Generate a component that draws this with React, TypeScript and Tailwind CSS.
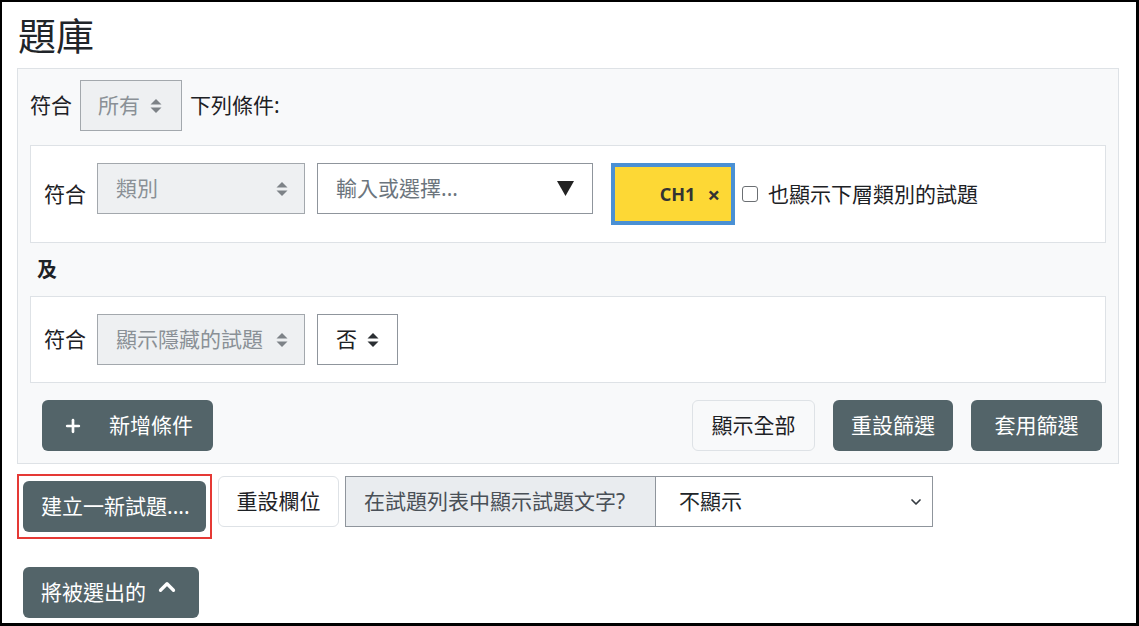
import { ChevronDown, ChevronUp, Plus } from "lucide-react";

function SortArrows({ dark }: { dark?: boolean }) {
  return (
    <svg width="12" height="16" viewBox="0 0 12 16" className="shrink-0">
      <polygon points="6,1 11.5,6.5 0.5,6.5" fill={dark ? "#2b2f33" : "#7d8287"} />
      <polygon points="0.5,9.5 11.5,9.5 6,15" fill={dark ? "#2b2f33" : "#7d8287"} />
    </svg>
  );
}

const darkBtn =
  "h-[51px] rounded-[6px] bg-[#536469] text-white flex items-center text-[21px] leading-none";

export default function App() {
  return (
    <div className="w-[1139px] h-[626px] overflow-hidden border-black border-t-2 border-l-2 border-r-[3px] border-b-[3px] bg-white text-[#1d2125] font-['Noto_Sans','Noto_Sans_CJK_TC',sans-serif]">
      <div className="pl-[15px]">
        {/* Title */}
        <div className="h-[66px] flex items-center pl-[1px] text-[38px] leading-none text-[#212529]">
          題庫
        </div>

        {/* Filter panel */}
        <div className="w-[1102px] border border-[#dee2e6] bg-[#f8f9fa] px-3 pt-[11px] pb-[12px]">
          <div className="flex items-center h-[51px] text-[21px] leading-none">
            <span>符合</span>
            <div className="ml-2 w-[102px] h-[51px] border border-[#a3a8ad] bg-[#eef0f2] flex items-center pl-[17px] gap-[10px] text-[#8a9096]">
              所有
              <SortArrows />
            </div>
            <span className="ml-2">下列條件:</span>
          </div>

          {/* Condition 1 */}
          <div className="mt-[14px] bg-white border border-[#dee2e6] pl-[13px] py-[17px]">
            <div className="h-[62px] flex items-center text-[21px] leading-none">
              <span>符合</span>
              <div className="self-start ml-[11px] w-[208px] h-[51px] border border-[#a3a8ad] bg-[#eef0f2] flex items-center justify-between pl-[18px] pr-[16px] text-[#8a9096]">
                類別
                <SortArrows />
              </div>
              <div className="self-start ml-[12px] w-[276px] h-[51px] border border-[#8f959c] bg-white flex items-center justify-between pl-[18px] pr-[18px] text-[#6c757d]">
                輸入或選擇...
                <svg width="17" height="15" viewBox="0 0 17 15">
                  <polygon points="0,0 17,0 8.5,15" fill="#222" />
                </svg>
              </div>
              <div className="ml-[18px] w-[124px] h-[62px] border-4 border-[#4a90d4] bg-[#fdd835] flex items-center justify-end pr-[11px] gap-[12px] text-[18px] font-bold text-[#333]">
                <span>CH1</span>
                <span className="text-[22px]">×</span>
              </div>
              <div className="ml-[7px] w-[16px] h-[16px] rounded-[3px] border-[1.5px] border-[#6b6f73] bg-white" />
              <span className="ml-[10px]">也顯示下層類別的試題</span>
            </div>
          </div>

          <div className="h-[53px] flex items-center pl-[7px] text-[20px] font-bold leading-none">
            及
          </div>

          {/* Condition 2 */}
          <div className="bg-white border border-[#dee2e6] pl-[13px] py-[17px]">
            <div className="h-[51px] flex items-center text-[21px] leading-none">
              <span>符合</span>
              <div className="ml-[11px] w-[208px] h-[51px] border border-[#a3a8ad] bg-[#eef0f2] flex items-center justify-between pl-[18px] pr-[16px] text-[#8a9096]">
                顯示隱藏的試題
                <SortArrows />
              </div>
              <div className="ml-[12px] w-[81px] h-[51px] border border-[#8f959c] bg-white flex items-center pl-[18px] gap-[10px]">
                否
                <SortArrows dark />
              </div>
            </div>
          </div>

          {/* Panel buttons */}
          <div className="mt-[17px] flex items-center justify-between pl-3 pr-1">
            <button className={`${darkBtn} w-[171px] pl-[21px]`}>
              <Plus size={20} strokeWidth={3.2} />
              <span className="ml-[26px]">新增條件</span>
            </button>
            <div className="flex items-center gap-[18px]">
              <button className="h-[51px] w-[123px] rounded-[6px] border border-[#dee2e6] bg-[#f8f9fa] flex items-center justify-center text-[21px] leading-none">
                顯示全部
              </button>
              <button className={`${darkBtn} w-[120px] justify-center`}>重設篩選</button>
              <button className={`${darkBtn} w-[131px] justify-center`}>套用篩選</button>
            </div>
          </div>
        </div>

        {/* Bottom row */}
        <div className="mt-[10px] flex items-start">
          <div className="border-2 border-[#e53935] px-1 py-[5px]">
            <button className={`${darkBtn} w-[183px] pl-[18px]`}>建立一新試題....</button>
          </div>
          <button className="ml-[6px] mt-[2px] w-[121px] h-[51px] rounded-[6px] border border-[#dee2e6] bg-white flex items-center justify-center text-[21px] leading-none">
            重設欄位
          </button>
          <div className="ml-[6px] mt-[2px] flex text-[21px] leading-none">
            <div className="w-[311px] h-[51px] border border-[#8f959c] bg-[#e9ecef] flex items-center pl-[18px] text-[#495057]">
              在試題列表中顯示試題文字?
            </div>
            <div className="w-[277px] h-[51px] border border-l-0 border-[#8f959c] bg-white flex items-center justify-between pl-[23px] pr-[8px] text-[#212529]">
              不顯示
              <ChevronDown size={16} strokeWidth={2.6} className="text-[#343a40]" />
            </div>
          </div>
        </div>

        <button className={`${darkBtn} mt-[28px] ml-[6px] w-[176px] pl-[18px]`}>
          將被選出的
          <ChevronUp size={26} strokeWidth={3} className="ml-[8px] -mt-[12px]" />
        </button>
      </div>
    </div>
  );
}
